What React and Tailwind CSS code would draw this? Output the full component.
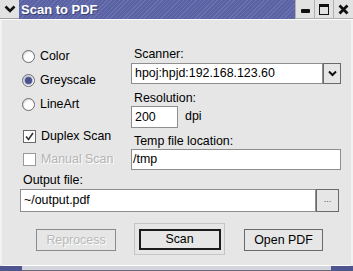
import React from "react";

function Radio({ checked, label }) {
  return (
    <div className="flex items-center h-[24px]">
      <div className="ml-[2px] w-[13px] h-[13px] rounded-full border border-[#6a6a6a] bg-white flex items-center justify-center shadow-[inset_1px_1px_1px_rgba(0,0,0,0.15)]">
        {checked && <div className="w-[7px] h-[7px] rounded-full bg-[#4a5288] shadow-[0_0_1px_1px_rgba(120,130,190,0.6)]" />}
      </div>
      <span className="ml-[5px]">{label}</span>
    </div>
  );
}

function Check({ checked, label, disabled, h }) {
  return (
    <div className={"flex items-center " + h}>
      <div className={"ml-[3px] w-[13px] h-[13px] border bg-white flex items-center justify-center " + (disabled ? "border-[#9a9a9a]" : "border-[#6a6a6a]")}>
        {checked && (
          <svg width="11" height="11" viewBox="0 0 11 11">
            <path d="M2 5.5 L4.5 8.5 L9 2" fill="none" stroke="#333" strokeWidth="1.6" />
          </svg>
        )}
      </div>
      <span className={"ml-[5px] " + (disabled ? "text-[#b4b4b4] [text-shadow:1px_1px_0_#ffffff]" : "")}>{label}</span>
    </div>
  );
}

export default function App() {
  return (
    <div className="w-[353px] h-[271px] bg-[#e6e6e6] flex flex-col overflow-hidden text-[12.4px] text-black font-['Liberation_Sans',Arial,sans-serif] leading-none">
      {/* Title bar */}
      <div className="h-[19px] flex shrink-0">
        <div className="w-[19px] h-[19px] bg-[#e2e2e2] border-b border-[#a0a0a0] flex items-center justify-center">
          <svg width="12" height="10" viewBox="0 0 12 10">
            <path d="M1.5 2.5 L6 7 L10.5 2.5" fill="none" stroke="#111" strokeWidth="2.6" />
          </svg>
        </div>
        <div className="flex-1 h-[19px] flex items-center pl-[2px] text-white font-bold text-[13px] bg-[repeating-linear-gradient(135deg,#5a62a3_0px,#5a62a3_2px,#6a72b2_2px,#6a72b2_3px)] [text-shadow:1px_1px_0_#3a3f70]">
          Scan to PDF
        </div>
        <div className="w-[19px] h-[19px] bg-[#e2e2e2] border-l border-b border-[#b0b0b0] flex items-end justify-center pb-[5px]">
          <div className="w-[9px] h-[4px] bg-[#111] rounded-[1px]" />
        </div>
        <div className="w-[19px] h-[19px] bg-[#e2e2e2] border-l border-b border-[#b0b0b0] flex items-center justify-center">
          <div className="w-[10px] h-[11px] border border-[#111] border-t-[3px]" />
        </div>
        <div className="w-[20px] h-[19px] bg-[#e2e2e2] border-l border-b border-[#b0b0b0] flex items-center justify-center">
          <svg width="11" height="11" viewBox="0 0 11 11">
            <path d="M1.5 1.5 L9.5 9.5 M9.5 1.5 L1.5 9.5" stroke="#111" strokeWidth="2.8" />
          </svg>
        </div>
      </div>
      <div className="h-px bg-white" />

      {/* Body */}
      <div className="flex-1 flex flex-col border-l-2 border-r-2 border-[#f2f2f2]">
        <div className="flex pl-[18px]">
          {/* Left column */}
          <div className="w-[111px] pt-[24px]">
            <Radio label="Color" />
            <Radio checked label="Greyscale" />
            <Radio label="LineArt" />
            <div className="h-[8px]" />
            <Check checked label="Duplex Scan" h="h-[24px]" />
            <Check disabled label="Manual Scan" h="h-[22px]" />
          </div>
          {/* Right column */}
          <div className="w-[210px] pt-[26px]">
            <div className="h-[16px] flex items-center pl-[3px]">Scanner:</div>
            <div className="mt-[1px] flex h-[21px]">
              <div className="flex-1 bg-white border border-[#8e8e8e] flex items-center pl-[3px]">hpoj:hpjd:192.168.123.60</div>
              <div className="w-[18px] border border-[#6a6a6a] bg-[#e6e6e6] flex items-center justify-center">
                <svg width="9" height="7" viewBox="0 0 9 7">
                  <path d="M1 1.5 L4.5 5 L8 1.5" fill="none" stroke="#111" strokeWidth="2" />
                </svg>
              </div>
            </div>
            <div className="mt-[6px] h-[16px] flex items-center pl-[3px]">Resolution:</div>
            <div className="flex items-center h-[22px]">
              <div className="w-[47px] h-[22px] bg-white border border-[#8e8e8e] flex items-center pl-[3px]">200</div>
              <span className="ml-[7px] -mt-[2px]">dpi</span>
            </div>
            <div className="mt-[5px] h-[16px] flex items-center pl-[3px]">Temp file location:</div>
            <div className="h-[21px] bg-white border border-[#8e8e8e] flex items-center pl-[1px]">/tmp</div>
          </div>
        </div>

        {/* Output file */}
        <div className="pl-[18px] pr-[12px]">
          <div className="mt-[2px] h-[16px] flex items-center pl-[3px]">Output file:</div>
          <div className="flex h-[23px] mt-px">
            <div className="w-[296px] h-[23px] bg-white border border-[#8e8e8e] flex items-center pl-[3px]">~/output.pdf</div>
            <div className="w-[23px] h-[23px] border border-[#6a6a6a] flex items-center justify-center text-[9px] text-[#555] pb-[2px]">...</div>
          </div>
        </div>

        {/* Buttons */}
        <div className="flex mt-[11px] pl-[34px]">
          <div className="mt-[6px] w-[80px] h-[22px] border border-[#8a8a8a] flex items-center justify-center text-[#b8b8b8] [text-shadow:1px_1px_0_#ffffff]">
            Reprocess
          </div>
          <div className="ml-[18px] w-[91px] h-[32px] border border-[#c4c4c4] flex items-center justify-center">
            <div className="w-[82px] h-[21px] border-2 border-[#1c1c1c] flex items-center justify-center">Scan</div>
          </div>
          <div className="ml-[19px] mt-[6px] w-[79px] h-[22px] border border-[#6a6a6a] flex items-center justify-center">
            Open PDF
          </div>
        </div>
        <div className="flex-1" />
      </div>

      {/* Bottom frame */}
      <div className="h-px bg-white mx-[3px]" />
      <div className="h-[5px] flex">
        <div className="w-[22px] bg-[#4e558f]" />
        <div className="flex-1 bg-[#d4d4dc] border-b border-[#6a6a7a]" />
        <div className="w-[22px] bg-[#4e558f]" />
      </div>
    </div>
  );
}
